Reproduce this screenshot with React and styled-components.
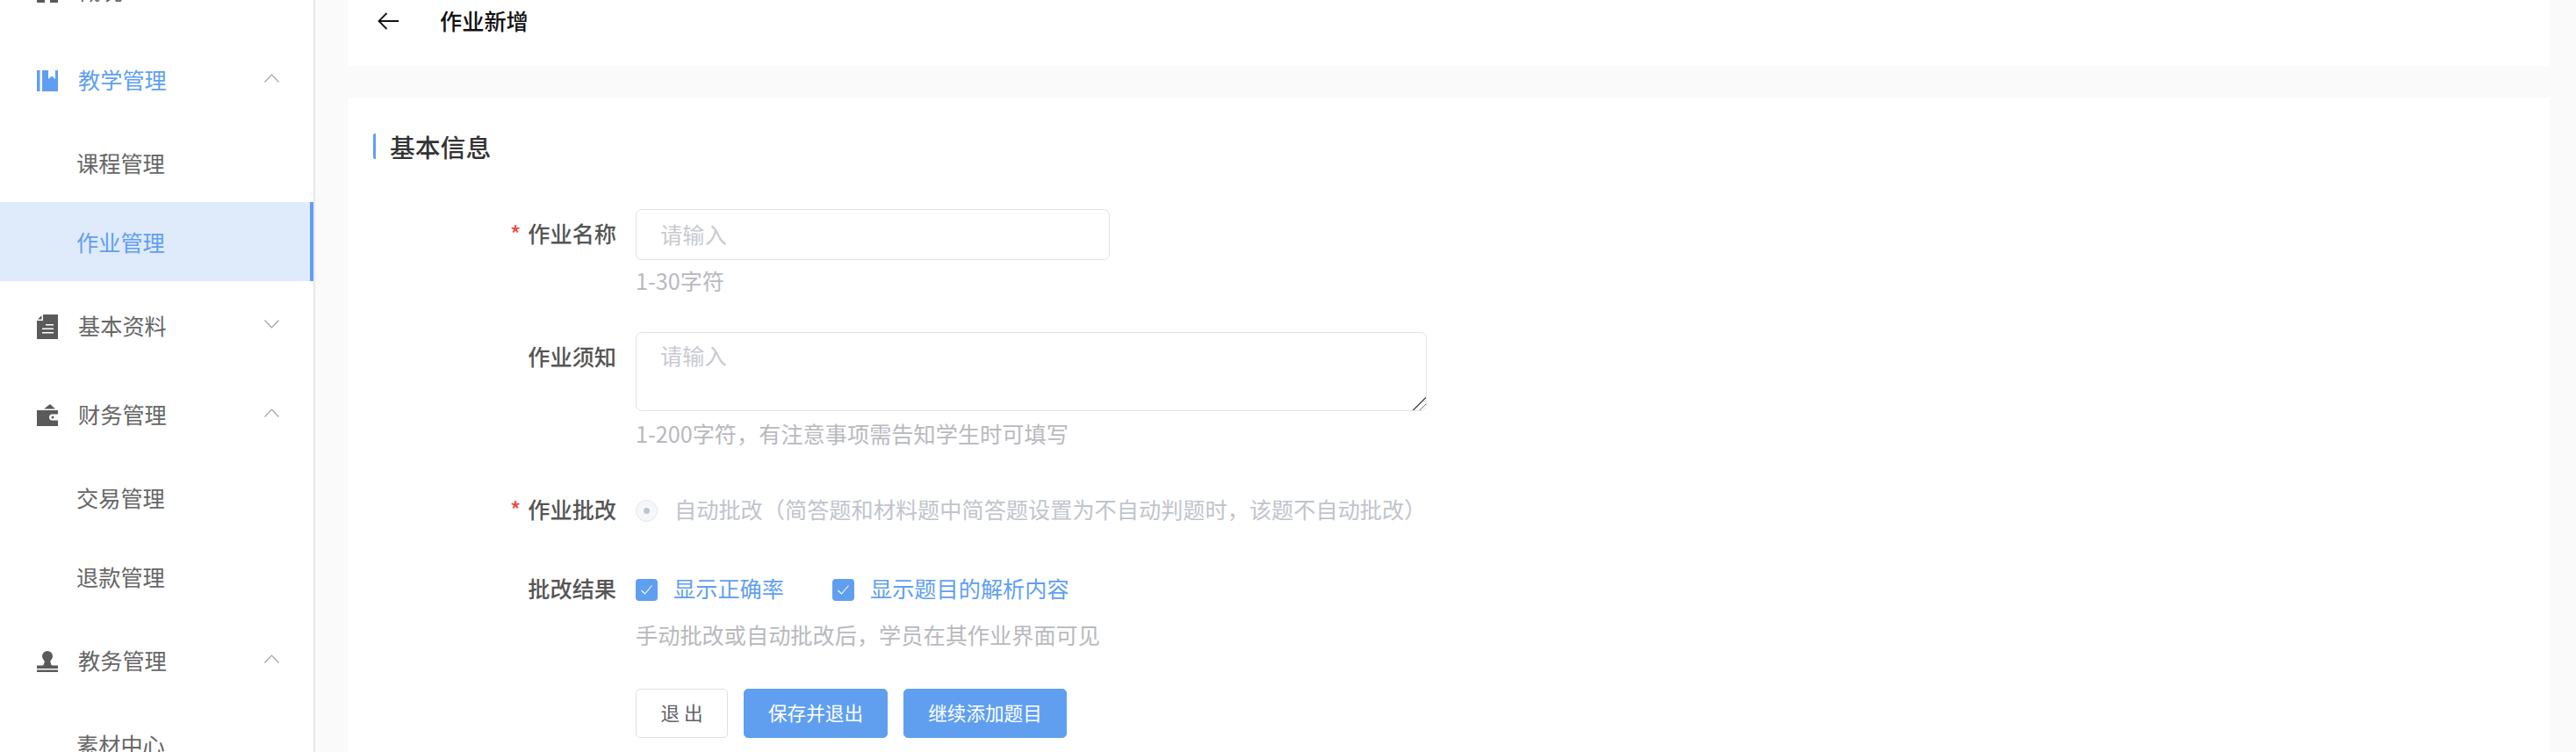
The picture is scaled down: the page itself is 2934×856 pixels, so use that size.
import React from "react";
import styled, { createGlobalStyle } from "styled-components";

const Global = createGlobalStyle`
  html, body { margin: 0; padding: 0; height: 100%; overflow: hidden; background: #fafafa; }
  body { font-family: "Noto Sans CJK SC", "Noto Sans", sans-serif; }
  #root { height: 100%; }
  * { box-sizing: border-box; }
`;

const Page = styled.div`
  display: flex;
  height: 100vh;
  overflow: hidden;
`;

// sidebar
const Sidebar = styled.aside`
  width: 359px;
  flex-shrink: 0;
  background: #fff;
  border-right: 2px solid #e8e8e8;
  overflow: hidden;
`;

const Menu = styled.div`
  margin-top: -61px;
`;

const HeadRow = styled.div`
  display: flex;
  align-items: center;
  height: 100.5px;
  padding: 0 39px 0 42px;
  color: ${({ $active }) => ($active ? "#609ff0" : "#666")};
  font-size: 25.2px;
`;

const IconBox = styled.span`
  display: flex;
  width: 24px;
  height: 28px;
  align-items: center;
  justify-content: center;
  margin: 4px 23px 0 0;
`;

const HeadText = styled.span`
  flex: 1;
`;

const SubRow = styled.div`
  display: flex;
  align-items: center;
  height: 90px;
  padding-left: 87px;
  font-size: 25.2px;
  color: ${({ $active }) => ($active ? "#609ff0" : "#666")};
  background: ${({ $active }) => ($active ? "#dfeafb" : "transparent")};
  border-right: 4px solid ${({ $active }) => ($active ? "#609ff0" : "transparent")};
`;

const ChevronSvg = styled.svg`
  width: 17px;
  height: 10px;
  margin-top: -2px;
`;

const Chevron = ({ up }) => (
  <ChevronSvg viewBox="0 0 17 10" fill="none">
    <polyline
      points={up ? "0.5,9.5 8.5,1 16.5,9.5" : "0.5,0.5 8.5,9 16.5,0.5"}
      stroke="#a0a0a0"
      strokeWidth="1.1"
    />
  </ChevronSvg>
);

const GridIcon = () => (
  <svg width="24" height="24" viewBox="0 0 24 24" fill="#5a5a5a">
    <rect x="0" y="0" width="9" height="24" />
    <rect x="15" y="0" width="9" height="24" />
  </svg>
);

const BookIcon = () => (
  <svg width="24" height="24" viewBox="0 0 24 24" fill="#609ff0">
    <rect x="0" y="0" width="3.500" height="24" />
    <path d="M6 0h7v10l4-3.500 4 3.500V0h3v24H6z" />
  </svg>
);

const DocIcon = () => (
  <svg width="24" height="28" viewBox="0 0 24 28" fill="#5a5a5a">
    <path
      fillRule="evenodd"
      d="M7 0h17v28H0V7h7zM10 11v1.500h9V11zM6 15.500V17h13v-1.500zM6 20v1.500h13V20z"
    />
    <path d="M1 5.500L5.500 1v4.500z" />
  </svg>
);

const WalletIcon = () => (
  <svg width="24" height="25" viewBox="0 0 24 25" fill="#5a5a5a">
    <path d="M8 5.500L15 0l6 5.500z" />
    <rect x="0" y="7" width="24" height="18" />
    <path d="M24 11.500h-6.500a3.500 3.500 0 0 0 0 7H24z" fill="#fff" />
    <circle cx="18" cy="15" r="1.500" />
  </svg>
);

const StampIcon = () => (
  <svg width="24" height="24" viewBox="0 0 24 24" fill="#5a5a5a">
    <circle cx="12" cy="6" r="6" />
    <path d="M9 10h6l1 5c.3 1.200 1.500 1.500 3 1.500h5V20H0v-3.500h5c1.500 0 2.700-.3 3-1.500z" />
    <rect x="0" y="21.500" width="24" height="2.500" />
  </svg>
);

// main part
const Main = styled.main`
  flex: 1;
  min-width: 0;
  padding: 0 30px 0 37px;
`;

const TopCard = styled.div`
  display: flex;
  align-items: flex-start;
  height: 75px;
  padding: 0 34px;
  background: #fff;
  margin-bottom: 36px;
`;

const BackIcon = styled.svg`
  width: 24px;
  height: 20px;
  margin: 14px 47px 0 0;
`;

const PageTitle = styled.div`
  font-size: 25.2px;
  font-weight: 500;
  color: #111;
  line-height: 47px;
`;

const FormCard = styled.div`
  background: #fff;
  padding-top: 41px;
  height: 900px;
`;

const SectionTitle = styled.div`
  margin: 0 0 57px 29px;
  height: 29px;
  padding-left: 16px;
  border-left: 3px solid #609ff0;
  border-radius: 2px;
  font-size: 28.8px;
  font-weight: 500;
  line-height: 29px;
  color: #333;
`;

const FormRow = styled.div`
  display: flex;
`;

const Label = styled.div`
  width: 306px;
  margin-right: 22px;
  flex-shrink: 0;
  text-align: right;
  font-size: 25.2px;
  font-weight: 500;
  line-height: 36px;
  color: #555;
  padding-top: ${({ $top }) => $top || 0}px;
`;

const Star = styled.span`
  color: #f5493d;
  margin-right: 8px;
`;

const Field = styled.div`
  flex: 1;
  min-width: 0;
  padding-top: ${({ $top }) => $top || 0}px;
`;

const TextInput = styled.input`
  display: block;
  width: 540px;
  height: 58px;
  padding: 0 27px 3px;
  border: 1.5px solid #e0e1e8;
  border-radius: 7px;
  outline: none;
  font-family: inherit;
  font-size: 25.2px;
  &::placeholder { color: #c8cad0; }
`;

const TextArea = styled.textarea`
  display: block;
  width: 901px;
  height: 90px;
  padding: 7px 27px;
  border: 1.5px solid #e0e1e8;
  border-radius: 7px;
  outline: none;
  resize: vertical;
  font-family: inherit;
  font-size: 25.2px;
  line-height: 36px;
  &::placeholder { color: #c8cad0; }
  &::-webkit-resizer {
    background: linear-gradient(
      135deg,
      transparent 0 48%,
      #555 48% 55%,
      transparent 55% 74%,
      #777 74% 80%,
      transparent 80%
    );
  }
`;

const Hint = styled.div`
  margin-top: ${({ $mt }) => $mt - 2}px;
  padding-bottom: 2px;
  font-size: 25.2px;
  line-height: 36px;
  color: #b8b9be;
`;

const Options = styled.div`
  display: flex;
  align-items: center;
  height: 36px;
`;

const RadioMark = styled.span`
  display: flex;
  align-items: center;
  justify-content: center;
  width: 25px;
  height: 25px;
  margin-right: 19px;
  flex-shrink: 0;
  border: 1.5px solid #e4e7ed;
  border-radius: 50%;
  background: #f5f7fa;
  &::after {
    content: "";
    width: 7px;
    height: 7px;
    border-radius: 50%;
    background: #c0c4cc;
  }
`;

const OptionText = styled.span`
  font-size: 25.2px;
  line-height: 36px;
  padding-bottom: 4px;
  color: ${({ $checked }) => ($checked ? "#609ff0" : "#c0c4cc")};
  margin-right: ${({ $mr }) => $mr || 0}px;
`;

const CheckMark = styled.span`
  display: flex;
  align-items: center;
  justify-content: center;
  width: 25px;
  height: 25px;
  margin-right: 18px;
  flex-shrink: 0;
  border-radius: 4px;
  background: #609ff0;
`;

const Check = () => (
  <svg width="15" height="13" viewBox="0 0 15 13" fill="none">
    <polyline points="1.500,7 5.500,11 13.500,1.500" stroke="#fff" strokeWidth="1.100" />
  </svg>
);

const Buttons = styled.div`
  display: flex;
  gap: 18px;
  margin-top: 42px;
`;

const Button = styled.button`
  width: ${({ $w }) => $w}px;
  height: 56px;
  padding: 0 0 3px;
  border-radius: 5px;
  border: 1.5px solid ${({ $primary }) => ($primary ? "#609ff0" : "#dcdfe6")};
  background: ${({ $primary }) => ($primary ? "#609ff0" : "#fff")};
  color: ${({ $primary }) => ($primary ? "#fff" : "#606266")};
  font-family: inherit;
  font-size: 21.6px;
`;

const App = () => (
  <Page>
    <Global />
    <Sidebar>
      <Menu>
        <HeadRow>
          <IconBox><GridIcon /></IconBox>
          <HeadText>概况</HeadText>
        </HeadRow>
        <HeadRow $active>
          <IconBox><BookIcon /></IconBox>
          <HeadText>教学管理</HeadText>
          <Chevron up />
        </HeadRow>
        <SubRow>课程管理</SubRow>
        <SubRow $active>作业管理</SubRow>
        <HeadRow>
          <IconBox><DocIcon /></IconBox>
          <HeadText>基本资料</HeadText>
          <Chevron />
        </HeadRow>
        <HeadRow>
          <IconBox><WalletIcon /></IconBox>
          <HeadText>财务管理</HeadText>
          <Chevron up />
        </HeadRow>
        <SubRow>交易管理</SubRow>
        <SubRow>退款管理</SubRow>
        <HeadRow>
          <IconBox><StampIcon /></IconBox>
          <HeadText>教务管理</HeadText>
          <Chevron up />
        </HeadRow>
        <SubRow>素材中心</SubRow>
      </Menu>
    </Sidebar>
    <Main>
      <TopCard>
        <BackIcon viewBox="0 0 24 20" fill="none" stroke="#111" strokeWidth="1.800">
          <path d="M24 10H1.500M10.500 1L1.500 10l9 9" />
        </BackIcon>
        <PageTitle>作业新增</PageTitle>
      </TopCard>
      <FormCard>
        <SectionTitle>基本信息</SectionTitle>
        <FormRow>
          <Label $top={9}><Star>*</Star>作业名称</Label>
          <Field>
            <TextInput placeholder="请输入" />
            <Hint $mt={7}>1-30字符</Hint>
          </Field>
        </FormRow>
        <FormRow>
          <Label $top={48}>作业须知</Label>
          <Field $top={39}>
            <TextArea placeholder="请输入" />
            <Hint $mt={9}>1-200字符，有注意事项需告知学生时可填写</Hint>
          </Field>
        </FormRow>
        <FormRow>
          <Label $top={48}><Star>*</Star>作业批改</Label>
          <Field $top={50}>
            <Options>
              <RadioMark />
              <OptionText>自动批改（简答题和材料题中简答题设置为不自动判题时，该题不自动批改）</OptionText>
            </Options>
          </Field>
        </FormRow>
        <FormRow>
          <Label $top={52}>批改结果</Label>
          <Field $top={54}>
            <Options>
              <CheckMark><Check /></CheckMark>
              <OptionText $checked $mr={55}>显示正确率</OptionText>
              <CheckMark><Check /></CheckMark>
              <OptionText $checked>显示题目的解析内容</OptionText>
            </Options>
            <Hint $mt={17}>手动批改或自动批改后，学员在其作业界面可见</Hint>
            <Buttons>
              <Button $w={105}>退 出</Button>
              <Button $primary $w={164}>保存并退出</Button>
              <Button $primary $w={186}>继续添加题目</Button>
            </Buttons>
          </Field>
        </FormRow>
      </FormCard>
    </Main>
  </Page>
);

export default App;
